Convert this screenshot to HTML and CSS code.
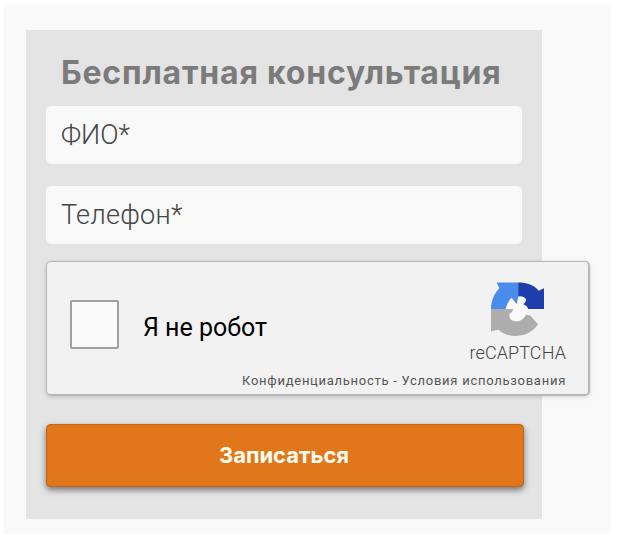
FILE: index.html
```html
<!DOCTYPE html>
<html lang="ru">
<head>
    <meta charset="UTF-8" />
    <title>Бесплатная консультация</title>
    <meta name="viewport" content="width=device-width, initial-scale=1.0" />
    <link rel="stylesheet" href="styles.css">
</head>

<body>
    <div class="page">
        <form class="consult-form">
            <h2>Бесплатная консультация</h2>

            <input class="field field-name" type="text" name="fullname" placeholder="ФИО*">
            <input class="field field-phone" type="text" name="phone" placeholder="Телефон*">

            <!-- Captcha -->
            <div class="captcha">
                <label class="captcha-check">
                    <input type="checkbox" name="robot">
                    <span>Я не робот</span>
                </label>
                <div class="captcha-brand">
                    <svg class="captcha-logo" viewBox="0 0 160 162">
                        <path fill="#fafafa" d="M44 81L62 47L78 66L76 48Q98 36 107 48Q108 62 97 67L114 77L106 98Q98 117 78 119Q48 116 56 95L68 86Z"/>
                        <path fill="#4a8cec" d="M17 1H82V43L78 66L62 47Q48 62 44 81H0C1 53 9 36 25 18Z"/>
                        <path fill="#1d3eac" d="M82 1C110 1 130 9 144 26L160 18V81H112Q109 71 97 67Q108 60 105 51Q98 40 82 43Z"/>
                        <path fill="#adadad" d="M0 81H68Q65 91 56 95Q51 116 78 119Q98 114 106 98L119 101L142 127C113 171 49 171 22 143L0 149Z"/>
                    </svg>
                    <span>reCAPTCHA</span>
                </div>
                <div class="captcha-links">Конфиденциальность - Условия использования</div>
            </div>

            <button class="submit-btn" type="button">Записаться</button>
        </form>
    </div>
</body>
</html>
```

FILE: styles.css
```css
* {
    box-sizing: border-box;
}

body {
    margin: 0;
    background: #fff;
    font-family: Roboto, Arial, sans-serif;
}

.page {
    width: 606px;
    height: 529px;
    margin: 5px 0 0 4px;
    padding: 25px 0 0 22px;
    background: #f9f9f9;
    box-shadow: 0 0 4px #f9f9f9;
}

/* --- Form --- */
.consult-form {
    display: flex;
    flex-direction: column;
    align-items: flex-start;
    width: 516px;
    height: 489px;
    padding: 20px;
    background: #e4e4e4;
}

h2 {
    margin: 0 0 11px 15px;
    font-family: Inter, "Noto Sans", sans-serif;
    font-size: 32px;
    font-weight: 700;
    line-height: 45px;
    letter-spacing: 0.8px;
    white-space: nowrap;
    color: #7b7b7b;
}

.field {
    width: 476px;
    height: 58px;
    margin-bottom: 22px;
    padding: 0 15px;
    border: none;
    border-radius: 5px;
    background: #f9f9f9;
    font-family: Roboto, sans-serif;
    font-size: 27px;
    font-weight: 300;
}

.field::placeholder {
    color: #444;
    opacity: 1;
}

.field-phone {
    margin-bottom: 17px;
    letter-spacing: 0.3px;
}

/* --- Captcha --- */
.captcha {
    display: grid;
    grid-template-columns: 1fr auto;
    grid-template-rows: 103px 1fr;
    width: 544px;
    height: 135px;
    margin-bottom: 28px;
    padding: 0 22px;
    flex-shrink: 0;
    border: 1px solid #b8b8b8;
    border-bottom-width: 2px;
    border-right-width: 2px;
    border-radius: 5px;
    background: #f2f2f2;
    box-shadow: 0 1px 4px rgba(0, 0, 0, 0.15);
}

.captcha-check {
    display: flex;
    align-items: center;
    gap: 24px;
    padding: 22px 0 0 1px;
    font-size: 25px;
    color: #000;
}

.captcha-check span {
    padding-top: 5px;
}

.captcha-check input {
    appearance: none;
    width: 49px;
    height: 49px;
    margin: 0;
    border: 2px solid #a0a0a0;
    border-radius: 2px;
    background: #fafafa;
}

.captcha-brand {
    display: flex;
    flex-direction: column;
    align-items: center;
    padding-top: 20px;
    font-size: 18px;
    font-weight: 300;
    line-height: 22px;
    letter-spacing: 0.1px;
    color: #444;
}

.captcha-logo {
    width: 53px;
    height: 54px;
    margin-bottom: 6px;
}

.captcha-links {
    grid-column: 1 / 3;
    padding-top: 8px;
    font-size: 13px;
    line-height: 16px;
    letter-spacing: 0.73px;
    text-align: right;
    white-space: nowrap;
    color: #555;
}

/* --- Button --- */
.submit-btn {
    width: 478px;
    height: 63px;
    padding: 0 2px 2px 0;
    border: none;
    border-radius: 5px;
    background: #e2761b;
    box-shadow: 0 3px 6px rgba(0, 0, 0, 0.5), inset 0 0 2px rgba(80, 50, 10, 0.7);
    font-family: Inter, "Noto Sans", sans-serif;
    font-size: 22px;
    font-weight: 700;
    color: #fffdf0;
}
```
